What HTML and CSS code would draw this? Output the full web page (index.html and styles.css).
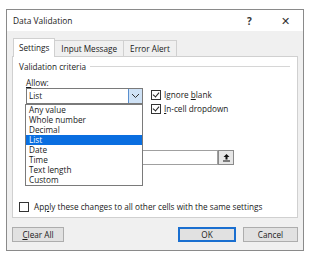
FILE: index.html
```html
<!DOCTYPE html>
<html lang="en">
<head>
    <meta charset="UTF-8">
    <title>Data Validation</title>
    <link rel="stylesheet" href="styles.css">
</head>
<body>

<div class="dialog">
    <div class="titlebar">
        <span class="title">Data Validation</span>
        <span class="help">?</span>
        <span class="close">&#x2715;</span>
    </div>

    <div class="dialog-body">
        <div class="tabs">
            <div class="tab active">Settings</div>
            <div class="tab">Input Message</div>
            <div class="tab">Error Alert</div>
        </div>

        <div class="panel">
            <div class="group-title"><span>Validation criteria</span><div class="rule"></div></div>

            <div class="label allow-label"><u>A</u>llow:</div>
            <div class="allow-row">
                <div class="combo-wrap">
                    <div class="combo">
                        <span class="combo-value">List</span>
                        <span class="combo-btn">
                            <svg width="9" height="6" viewBox="0 0 9 6"><path d="M1 1 L4.5 4.5 L8 1" fill="none" stroke="#333" stroke-width="1"/></svg>
                        </span>
                    </div>
                    <ul class="dropdown">
                        <li>Any value</li>
                        <li>Whole number</li>
                        <li>Decimal</li>
                        <li class="selected">List</li>
                        <li>Date</li>
                        <li>Time</li>
                        <li>Text length</li>
                        <li>Custom</li>
                    </ul>
                </div>
                <div class="checks">
                    <label class="check"><span class="box checked"></span><span>Ignore <u>b</u>lank</span></label>
                    <label class="check"><span class="box checked"></span><span><u>I</u>n-cell dropdown</span></label>
                </div>
            </div>

            <div class="source-row">
                <div class="source-input"></div>
                <div class="ref-btn">
                    <svg width="9" height="9" viewBox="0 0 9 9"><path d="M4.5 1 L1.5 4 H3.5 V6.5 H5.5 V4 H7.5 Z" fill="#111"/><rect x="1" y="7.5" width="7" height="1" fill="#111"/></svg>
                </div>
            </div>

            <label class="check apply"><span class="box"></span><span>Ap<u>p</u>ly these changes to all other cells with the same settings</span></label>
        </div>

        <div class="buttons">
            <button class="btn clear"><u>C</u>lear All</button>
            <div class="spacer"></div>
            <button class="btn ok">OK</button>
            <button class="btn cancel">Cancel</button>
        </div>
    </div>
</div>

</body>
</html>
```

FILE: styles.css
```css
body {
    margin: 0;
    background: #fff;
    font-family: "Open Sans", "Noto Sans", sans-serif;
    font-size: 8.2px;
    color: #1a1a1a;
}
.dialog {
    margin: 9px 0 0 6px;
    width: 296px;
    height: 240px;
    border: 1px solid #8a8a8a;
    background: #f0f0f0;
    display: flex;
    flex-direction: column;
}
.titlebar {
    height: 21px;
    background: #fff;
    display: flex;
    align-items: center;
    padding-left: 6px;
}
.title {
    flex: 1;
    font-size: 8.4px;
}
.help {
    width: 34px;
    font-size: 10px;
    font-weight: bold;
    color: #333;
}
.close {
    width: 22px;
    font-size: 11px;
    color: #333;
}
.dialog-body {
    flex: 1;
    padding: 9px 5px 0 5px;
    display: flex;
    flex-direction: column;
}
.tabs {
    display: flex;
    padding-left: 2px;
    height: 16px;
}
.tab {
    border: 1px solid #d0d0d0;
    border-bottom: none;
    background: #f0f0f0;
    padding: 0 6px;
    line-height: 15px;
    margin-left: -1px;
}
.tab.active {
    background: #fff;
    padding: 0 5px;
    margin-top: -2px;
    line-height: 17px;
    position: relative;
    z-index: 1;
    height: 18px;
}
.panel {
    box-sizing: border-box;
    height: 162px;
    background: #fff;
    border: 1px solid #d0d0d0;
    padding: 3px 6px 0 6px;
}
.group-title {
    display: flex;
    align-items: center;
    gap: 4px;
    height: 13px;
}
.rule {
    flex: 1;
    border-top: 1px solid #d6d6d6;
    margin-right: 1px;
}
.label {
    margin-left: 7px;
}
.allow-label {
    margin-top: 4px;
    height: 11px;
}
.allow-row {
    display: flex;
    margin-left: 7px;
    gap: 8px;
}
.combo-wrap {
    position: relative;
    z-index: 2;
}
.combo {
    width: 115px;
    height: 14px;
    border: 1px solid #7a7a7a;
    display: flex;
    background: #fff;
}
.combo-value {
    flex: 1;
    padding-left: 2px;
    line-height: 14px;
}
.combo-btn {
    width: 13px;
    background: #cfe2f6;
    border-left: 1px solid #5a8fcf;
    display: flex;
    align-items: center;
    justify-content: center;
}
.dropdown {
    position: absolute;
    top: 16px;
    left: -1px;
    width: 116px;
    margin: 0;
    padding: 0;
    list-style: none;
    background: #fff;
    border: 1px solid #7a7a7a;
}
.dropdown li {
    height: 10px;
    line-height: 10px;
    padding-left: 3px;
}
.dropdown li.selected {
    background: #0a6ee0;
    color: #fff;
}
.checks {
    display: flex;
    flex-direction: column;
    gap: 3px;
    margin-top: 1px;
}
.check {
    display: flex;
    align-items: center;
    gap: 3px;
}
.box {
    width: 8px;
    height: 8px;
    border: 1px solid #333;
    background: #fff;
    position: relative;
}
.box.checked::after {
    content: "";
    position: absolute;
    left: 2px;
    top: 0px;
    width: 3px;
    height: 5px;
    border-right: 1px solid #222;
    border-bottom: 1px solid #222;
    transform: rotate(40deg);
}
.source-row {
    display: flex;
    margin-left: 7px;
    margin-top: 36px;
}
.source-input {
    width: 190px;
    height: 13px;
    border: 1px solid #a0a0a0;
    background: #fff;
}
.ref-btn {
    width: 14px;
    height: 13px;
    border: 1px solid #8a8a8a;
    background: #e6e6e6;
    display: flex;
    align-items: center;
    justify-content: center;
}
.apply {
    margin-top: 36px;
    gap: 5px;
}
.buttons {
    display: flex;
    margin-top: 9px;
    gap: 7px;
}
.spacer {
    flex: 1;
}
.btn {
    font-family: inherit;
    font-size: 8.2px;
    height: 15px;
    padding: 0;
    border: 1px solid #adadad;
    background: #e1e1e1;
    color: #1a1a1a;
}
.clear {
    width: 52px;
}
.ok {
    width: 58px;
    border: 1px solid #1a6fd0;
    box-shadow: inset 0 0 0 1px #1a6fd0;
}
.cancel {
    width: 55px;
}
```
